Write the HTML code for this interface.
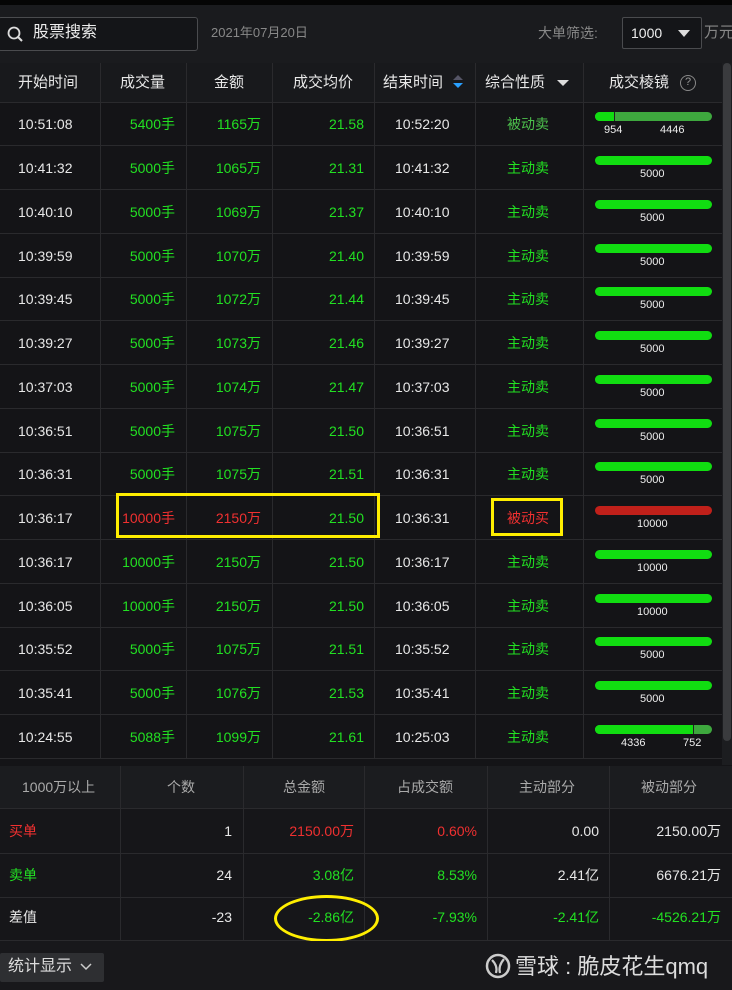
<!DOCTYPE html>
<html><head><meta charset="utf-8"><style>
*{margin:0;padding:0;box-sizing:border-box}
body{width:732px;height:990px;background:#141417;position:relative;overflow:hidden;font-family:"Liberation Sans","Noto Sans CJK SC",sans-serif;color:#e8e8e8;font-size:14px}
.a{position:absolute;white-space:nowrap;line-height:18px}
.g{color:#22e022}.r{color:#f03030}.pg{color:#4cc04c}
.row{position:absolute;left:0;width:722px;height:44px;border-bottom:1px solid #2a2a2d}
.row .a{top:13px}
.vl{position:absolute;width:1px;background:#2a2a2d}
.bar{position:absolute;left:595px;width:117px;height:9px;border-radius:5px;top:10px;overflow:hidden;background:#11dd11}
.lb{position:absolute;font-size:11px;top:22px;color:#eee;line-height:13px}
</style></head><body>
<div class="a" style="left:0;top:0;width:732px;height:5px;background:#050505"></div>
<div class="a" style="left:0;top:5px;width:732px;height:58px;background:#1a1b1e"></div>
<div class="a" style="left:-2px;top:17px;width:200px;height:34px;border:1px solid #4a4b4e;border-radius:3px;background:#141518"></div>
<svg class="a" style="left:6px;top:25px" width="18" height="18" viewBox="0 0 18 18"><circle cx="8" cy="8" r="5.5" fill="none" stroke="#ddd" stroke-width="1.8"/><line x1="12" y1="12" x2="16" y2="16" stroke="#ddd" stroke-width="2"/></svg>
<div class="a" style="left:33px;top:24px;font-size:16px;color:#eee">股票搜索</div>
<div class="a" style="left:211px;top:24px;font-size:13px;color:#888">2021年07月20日</div>
<div class="a" style="left:538px;top:24px;font-size:14px;color:#888">大单筛选:</div>
<div class="a" style="left:622px;top:17px;width:80px;height:32px;border:1px solid #4a4b4e;background:#141518;border-radius:2px"></div>
<div class="a" style="left:631px;top:24px;font-size:14px;color:#eee">1000</div>
<div class="a" style="left:678px;top:30px;width:0;height:0;border-left:6px solid transparent;border-right:6px solid transparent;border-top:7px solid #ddd"></div>
<div class="a" style="left:704px;top:24px;font-size:15px;color:#888">万元</div>

<div class="a" style="left:0;top:63px;width:722px;height:40px;background:#18191c;border-bottom:1px solid #2a2a2d"></div>
<div class="a" style="left:18px;top:74px;font-size:15px">开始时间</div>
<div class="a" style="left:120px;top:74px;font-size:15px">成交量</div>
<div class="a" style="left:214px;top:74px;font-size:15px">金额</div>
<div class="a" style="left:293px;top:74px;font-size:15px">成交均价</div>
<div class="a" style="left:383px;top:74px;font-size:15px">结束时间</div>
<div class="a" style="left:453px;top:75px;width:0;border-left:5px solid transparent;border-right:5px solid transparent;border-bottom:5px solid #556"></div>
<div class="a" style="left:453px;top:83px;width:0;border-left:5px solid transparent;border-right:5px solid transparent;border-top:5px solid #29a0ff"></div>
<div class="a" style="left:485px;top:74px;font-size:15px">综合性质</div>
<div class="a" style="left:557px;top:80px;width:0;border-left:6px solid transparent;border-right:6px solid transparent;border-top:6px solid #ddd"></div>
<div class="a" style="left:609px;top:74px;font-size:15px">成交棱镜</div>
<div class="a" style="left:680px;top:75px;width:16px;height:16px;border:1.5px solid #888;border-radius:50%;font-size:11px;color:#999;text-align:center;line-height:13px">?</div>

<div class="vl" style="left:100px;top:63px;height:695px"></div>
<div class="vl" style="left:186px;top:63px;height:695px"></div>
<div class="vl" style="left:272px;top:63px;height:695px"></div>
<div class="vl" style="left:374px;top:63px;height:695px"></div>
<div class="vl" style="left:475px;top:63px;height:695px"></div>
<div class="vl" style="left:583px;top:63px;height:695px"></div>
<div class="a" style="left:722px;top:63px;width:10px;height:702px;background:#1c1d20"></div>
<div class="a" style="left:723px;top:63px;width:8px;height:678px;background:#3a3b3e;border-radius:4px"></div>

<div class="row" style="top:102px"><div class="a" style="left:18px">10:51:08</div><div class="a g" style="right:547px">5400手</div><div class="a g" style="right:461px">1165万</div><div class="a g" style="right:358px">21.58</div><div class="a" style="left:395px">10:52:20</div><div class="a pg" style="left:507px">被动卖</div><div class="bar" style="background:#3ea83e"><div style="width:20px;height:9px;background:#11dd11;border-right:1px solid #222"></div></div><div class="lb" style="left:604px">954</div><div class="lb" style="left:660px">4446</div></div>
<div class="row" style="top:146px"><div class="a" style="left:18px">10:41:32</div><div class="a g" style="right:547px">5000手</div><div class="a g" style="right:461px">1065万</div><div class="a g" style="right:358px">21.31</div><div class="a" style="left:395px">10:41:32</div><div class="a g" style="left:507px">主动卖</div><div class="bar"></div><div class="lb" style="left:640px">5000</div></div>
<div class="row" style="top:190px"><div class="a" style="left:18px">10:40:10</div><div class="a g" style="right:547px">5000手</div><div class="a g" style="right:461px">1069万</div><div class="a g" style="right:358px">21.37</div><div class="a" style="left:395px">10:40:10</div><div class="a g" style="left:507px">主动卖</div><div class="bar"></div><div class="lb" style="left:640px">5000</div></div>
<div class="row" style="top:234px"><div class="a" style="left:18px">10:39:59</div><div class="a g" style="right:547px">5000手</div><div class="a g" style="right:461px">1070万</div><div class="a g" style="right:358px">21.40</div><div class="a" style="left:395px">10:39:59</div><div class="a g" style="left:507px">主动卖</div><div class="bar"></div><div class="lb" style="left:640px">5000</div></div>
<div class="row" style="top:277px"><div class="a" style="left:18px">10:39:45</div><div class="a g" style="right:547px">5000手</div><div class="a g" style="right:461px">1072万</div><div class="a g" style="right:358px">21.44</div><div class="a" style="left:395px">10:39:45</div><div class="a g" style="left:507px">主动卖</div><div class="bar"></div><div class="lb" style="left:640px">5000</div></div>
<div class="row" style="top:321px"><div class="a" style="left:18px">10:39:27</div><div class="a g" style="right:547px">5000手</div><div class="a g" style="right:461px">1073万</div><div class="a g" style="right:358px">21.46</div><div class="a" style="left:395px">10:39:27</div><div class="a g" style="left:507px">主动卖</div><div class="bar"></div><div class="lb" style="left:640px">5000</div></div>
<div class="row" style="top:365px"><div class="a" style="left:18px">10:37:03</div><div class="a g" style="right:547px">5000手</div><div class="a g" style="right:461px">1074万</div><div class="a g" style="right:358px">21.47</div><div class="a" style="left:395px">10:37:03</div><div class="a g" style="left:507px">主动卖</div><div class="bar"></div><div class="lb" style="left:640px">5000</div></div>
<div class="row" style="top:409px"><div class="a" style="left:18px">10:36:51</div><div class="a g" style="right:547px">5000手</div><div class="a g" style="right:461px">1075万</div><div class="a g" style="right:358px">21.50</div><div class="a" style="left:395px">10:36:51</div><div class="a g" style="left:507px">主动卖</div><div class="bar"></div><div class="lb" style="left:640px">5000</div></div>
<div class="row" style="top:452px"><div class="a" style="left:18px">10:36:31</div><div class="a g" style="right:547px">5000手</div><div class="a g" style="right:461px">1075万</div><div class="a g" style="right:358px">21.51</div><div class="a" style="left:395px">10:36:31</div><div class="a g" style="left:507px">主动卖</div><div class="bar"></div><div class="lb" style="left:640px">5000</div></div>
<div class="row" style="top:496px"><div class="a" style="left:18px">10:36:17</div><div class="a r" style="right:547px">10000手</div><div class="a r" style="right:461px">2150万</div><div class="a g" style="right:358px">21.50</div><div class="a" style="left:395px">10:36:31</div><div class="a r" style="left:507px">被动买</div><div class="bar" style="background:#c0201a"></div><div class="lb" style="left:637px">10000</div></div>
<div class="row" style="top:540px"><div class="a" style="left:18px">10:36:17</div><div class="a g" style="right:547px">10000手</div><div class="a g" style="right:461px">2150万</div><div class="a g" style="right:358px">21.50</div><div class="a" style="left:395px">10:36:17</div><div class="a g" style="left:507px">主动卖</div><div class="bar"></div><div class="lb" style="left:637px">10000</div></div>
<div class="row" style="top:584px"><div class="a" style="left:18px">10:36:05</div><div class="a g" style="right:547px">10000手</div><div class="a g" style="right:461px">2150万</div><div class="a g" style="right:358px">21.50</div><div class="a" style="left:395px">10:36:05</div><div class="a g" style="left:507px">主动卖</div><div class="bar"></div><div class="lb" style="left:637px">10000</div></div>
<div class="row" style="top:627px"><div class="a" style="left:18px">10:35:52</div><div class="a g" style="right:547px">5000手</div><div class="a g" style="right:461px">1075万</div><div class="a g" style="right:358px">21.51</div><div class="a" style="left:395px">10:35:52</div><div class="a g" style="left:507px">主动卖</div><div class="bar"></div><div class="lb" style="left:640px">5000</div></div>
<div class="row" style="top:671px"><div class="a" style="left:18px">10:35:41</div><div class="a g" style="right:547px">5000手</div><div class="a g" style="right:461px">1076万</div><div class="a g" style="right:358px">21.53</div><div class="a" style="left:395px">10:35:41</div><div class="a g" style="left:507px">主动卖</div><div class="bar"></div><div class="lb" style="left:640px">5000</div></div>
<div class="row" style="top:715px"><div class="a" style="left:18px">10:24:55</div><div class="a g" style="right:547px">5088手</div><div class="a g" style="right:461px">1099万</div><div class="a g" style="right:358px">21.61</div><div class="a" style="left:395px">10:25:03</div><div class="a g" style="left:507px">主动卖</div><div class="bar" style="background:#3ea83e"><div style="width:99px;height:9px;background:#11dd11;border-right:1px solid #222"></div></div><div class="lb" style="left:621px">4336</div><div class="lb" style="left:683px">752</div></div>

<div class="a" style="left:116px;top:493px;width:264px;height:45px;border:3px solid #ffee00"></div>
<div class="a" style="left:491px;top:498px;width:72px;height:38px;border:3px solid #ffee00"></div>

<div class="a" style="left:0;top:766px;width:732px;height:174px;background:#161619"></div>
<div class="a" style="left:0;top:766px;width:732px;height:43px;background:#1b1c1f;border-bottom:1px solid #2a2a2d"></div>
<div class="a" style="left:0;top:853px;width:732px;height:1px;background:#2a2a2d"></div>
<div class="a" style="left:0;top:897px;width:732px;height:1px;background:#2a2a2d"></div>
<div class="a" style="left:0;top:940px;width:732px;height:1px;background:#2a2a2d"></div>
<div class="vl" style="left:120px;top:766px;height:174px"></div>
<div class="vl" style="left:243px;top:766px;height:174px"></div>
<div class="vl" style="left:364px;top:766px;height:174px"></div>
<div class="vl" style="left:487px;top:766px;height:174px"></div>
<div class="vl" style="left:609px;top:766px;height:174px"></div>
<div class="a" style="left:22px;top:778px;color:#aaa">1000万以上</div>
<div class="a" style="left:167px;top:778px;color:#aaa">个数</div>
<div class="a" style="left:283px;top:778px;color:#aaa">总金额</div>
<div class="a" style="left:397px;top:778px;color:#aaa">占成交额</div>
<div class="a" style="left:519px;top:778px;color:#aaa">主动部分</div>
<div class="a" style="left:641px;top:778px;color:#aaa">被动部分</div>

<div class="a r" style="left:9px;top:822px">买单</div>
<div class="a" style="right:500px;top:822px">1</div>
<div class="a r" style="right:378px;top:822px">2150.00万</div>
<div class="a r" style="right:255px;top:822px">0.60%</div>
<div class="a" style="right:133px;top:822px">0.00</div>
<div class="a" style="right:11px;top:822px">2150.00万</div>

<div class="a g" style="left:9px;top:866px">卖单</div>
<div class="a" style="right:500px;top:866px">24</div>
<div class="a g" style="right:378px;top:866px">3.08亿</div>
<div class="a g" style="right:255px;top:866px">8.53%</div>
<div class="a" style="right:133px;top:866px">2.41亿</div>
<div class="a" style="right:11px;top:866px">6676.21万</div>

<div class="a" style="left:9px;top:908px">差值</div>
<div class="a" style="right:500px;top:908px">-23</div>
<div class="a g" style="right:378px;top:908px">-2.86亿</div>
<div class="a g" style="right:255px;top:908px">-7.93%</div>
<div class="a g" style="right:133px;top:908px">-2.41亿</div>
<div class="a g" style="right:11px;top:908px">-4526.21万</div>
<div class="a" style="left:274px;top:895px;width:105px;height:47px;border:3px solid #ffee00;border-radius:50%"></div>

<div class="a" style="left:0;top:941px;width:732px;height:49px;background:#18181b"></div>
<div class="a" style="left:0;top:953px;width:104px;height:29px;background:#2e2f32;border-radius:2px"></div>
<div class="a" style="left:8px;top:958px;font-size:16px;color:#ddd">统计显示</div>
<svg class="a" style="left:80px;top:962px" width="12" height="10" viewBox="0 0 12 10"><polyline points="1,2 6,7 11,2" fill="none" stroke="#ccc" stroke-width="1.5"/></svg>
<svg class="a" style="left:485px;top:953px" width="26" height="26" viewBox="0 0 26 26"><circle cx="13" cy="13" r="11" fill="none" stroke="#ccc" stroke-width="2.5"/><path d="M7 7 Q13 13 11 20 M19 6 Q13 13 15 20" fill="none" stroke="#ccc" stroke-width="2.2"/></svg>
<div class="a" style="left:515px;top:954px;font-size:22px;line-height:26px;color:#ddd">雪球 : 脆皮花生qmq</div>
</body></html>
